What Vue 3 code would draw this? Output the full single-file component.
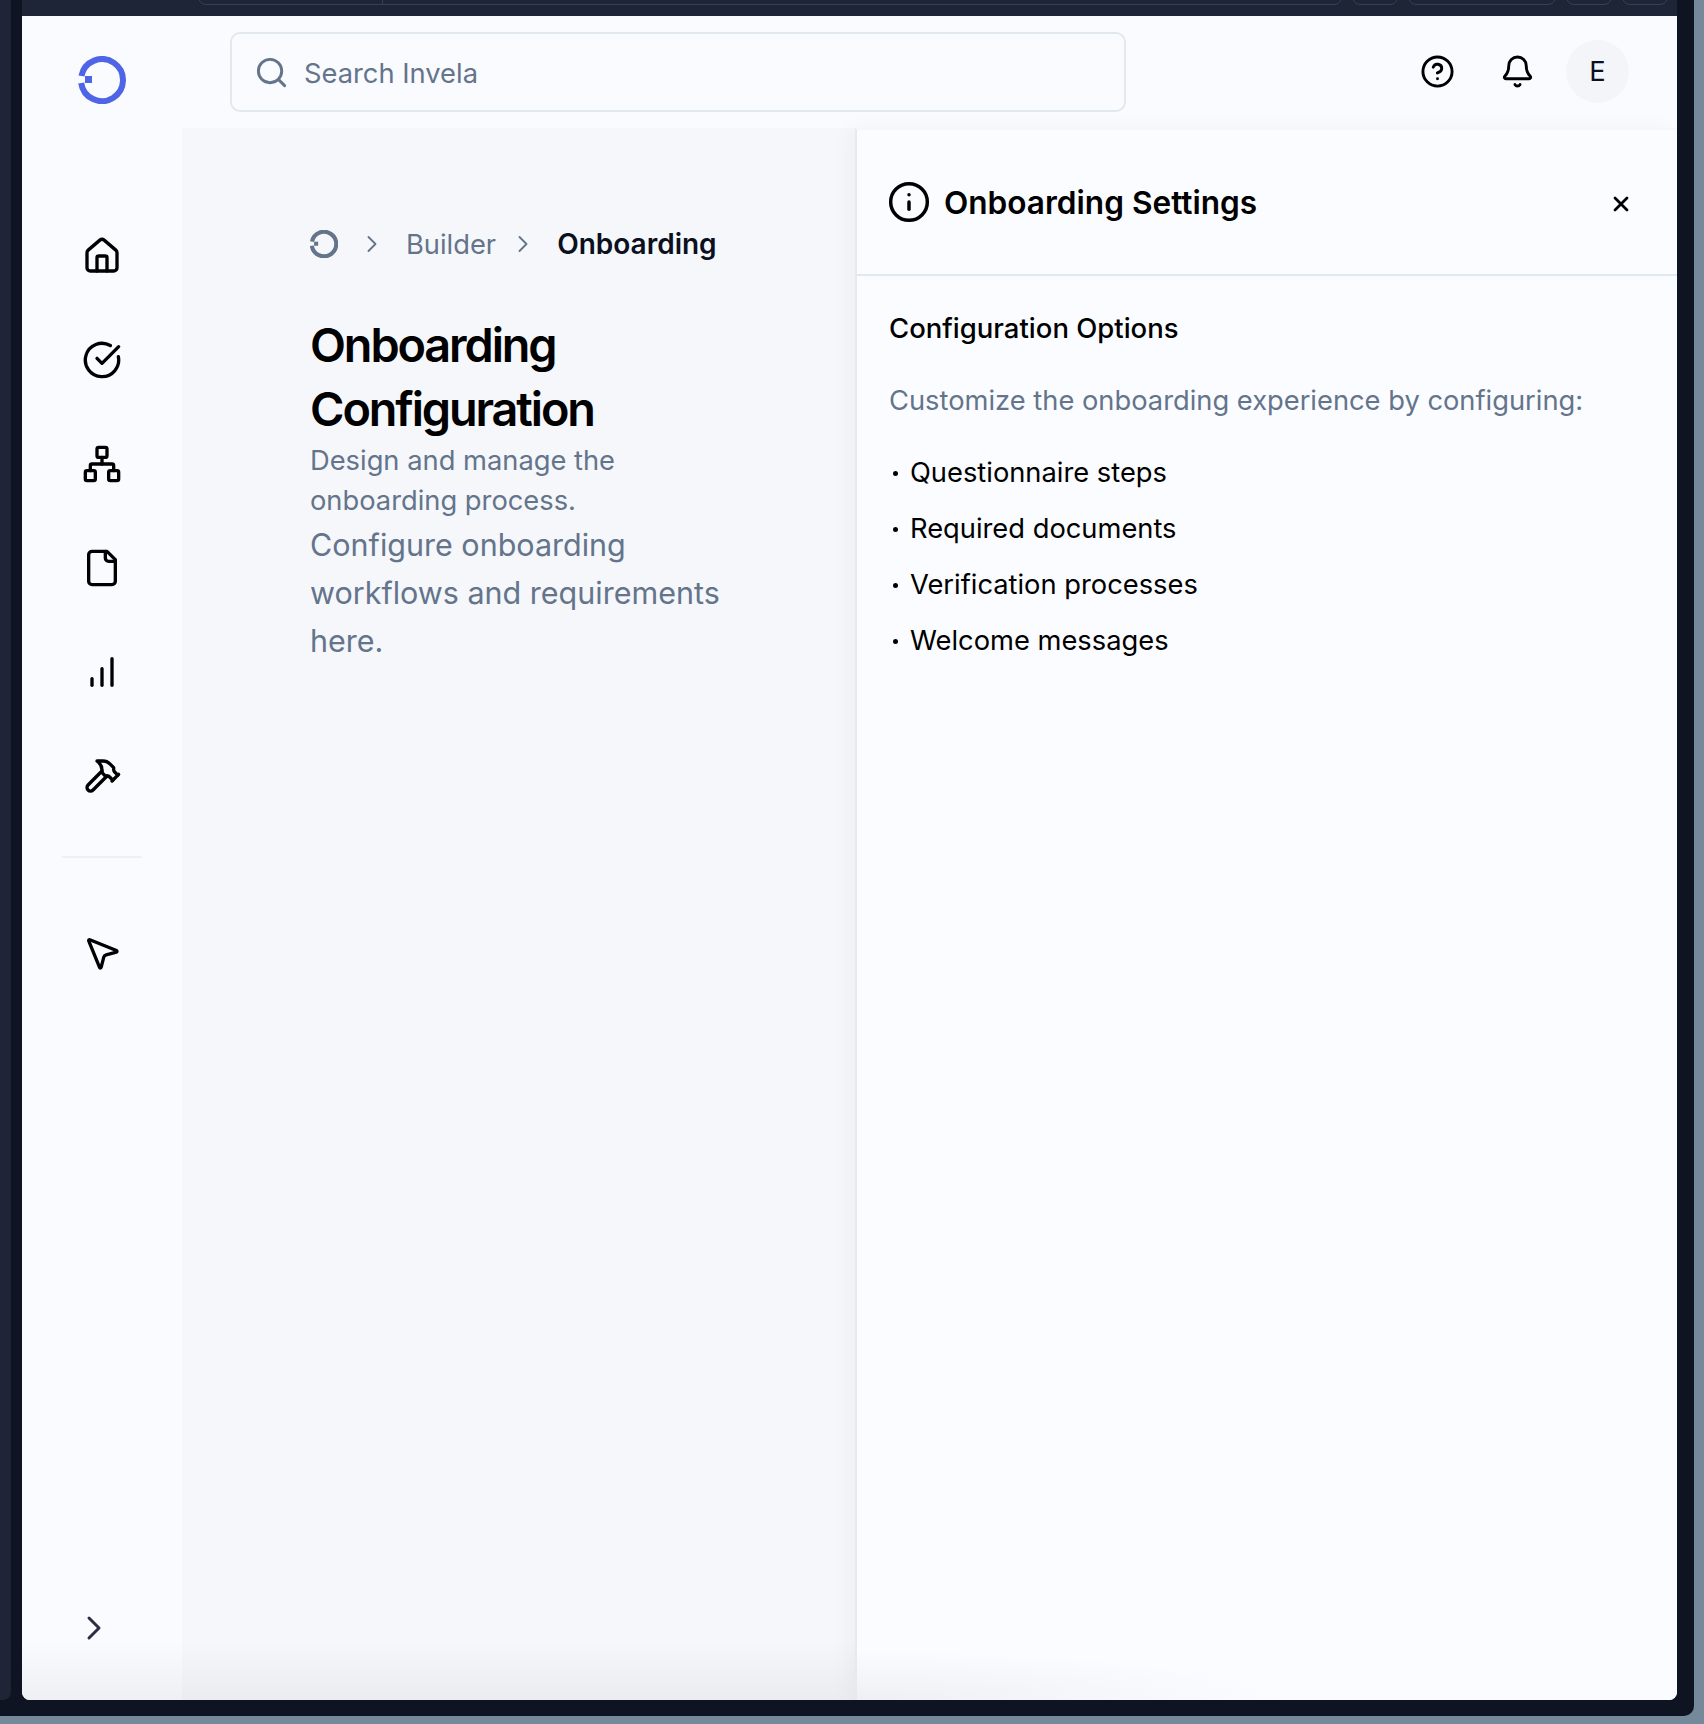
<template>
  <div class="desktop">
    <div class="frame">
      <div class="edge-strip"></div>
      <div class="window-col">
        <div class="tab-bar">
          <div class="tab-url">
            <span class="tab-url-start"></span>
          </div>
          <span class="tab-pill" style="width: 46px"></span>
          <span class="tab-pill" style="width: 148px"></span>
          <span class="tab-pill" style="width: 46px"></span>
          <span class="tab-pill" style="width: 46px"></span>
        </div>
        <div class="window">
          <aside class="sidebar">
            <svg class="logo" viewBox="0 0 48 48" fill="none">
              <path d="M3.4 20A21 21 0 1 1 3.2 27" stroke="#4f65e5" stroke-width="6" />
              <rect x="7" y="20" width="7" height="7" fill="#4f65e5" />
            </svg>
            <nav class="nav">
              <span v-for="item in navItems" :key="item.name" class="nav-item">
                <svg class="nav-icon" viewBox="0 0 24 24" fill="none" stroke="currentColor" stroke-width="2" stroke-linecap="round" stroke-linejoin="round">
                  <path v-for="d in item.paths" :key="d" :d="d" />
                  <rect v-for="r in item.rects || []" :key="r.x + '-' + r.y" :x="r.x" :y="r.y" width="6" height="6" rx="1" />
                </svg>
              </span>
            </nav>
            <div class="nav-divider"></div>
            <span class="nav-item">
              <svg class="nav-icon" viewBox="0 0 24 24" fill="none" stroke="currentColor" stroke-width="2" stroke-linecap="round" stroke-linejoin="round">
                <path d="M4.037 4.688a.495.495 0 0 1 .651-.651l16 6.5a.5.5 0 0 1-.063.947l-6.124 1.58a2 2 0 0 0-1.438 1.435l-1.579 6.126a.5.5 0 0 1-.947.063z" />
              </svg>
            </span>
            <svg class="collapse" viewBox="0 0 24 24" fill="none" stroke="currentColor" stroke-width="1.8" stroke-linecap="round" stroke-linejoin="round">
              <path d="m9 18 6-6-6-6" />
            </svg>
          </aside>

          <header class="topbar">
            <div class="search">
              <svg class="search-icon" viewBox="0 0 24 24" fill="none" stroke="currentColor" stroke-width="2" stroke-linecap="round" stroke-linejoin="round">
                <circle cx="11" cy="11" r="8" />
                <path d="m21 21-4.3-4.3" />
              </svg>
              <span class="search-text">Search Invela</span>
            </div>
            <div class="top-actions">
              <span class="top-action">
                <svg viewBox="0 0 24 24" fill="none" stroke="currentColor" stroke-width="2" stroke-linecap="round" stroke-linejoin="round">
                  <circle cx="12" cy="12" r="10" />
                  <path d="M9.09 9a3 3 0 0 1 5.83 1c0 2-3 3-3 3" />
                  <path d="M12 17h.01" />
                </svg>
              </span>
              <span class="top-action">
                <svg viewBox="0 0 24 24" fill="none" stroke="currentColor" stroke-width="2" stroke-linecap="round" stroke-linejoin="round">
                  <path d="M10.268 21a2 2 0 0 0 3.464 0" />
                  <path d="M3.262 15.326A1 1 0 0 0 4 17h16a1 1 0 0 0 .74-1.673C19.41 13.956 18 12.499 18 8A6 6 0 0 0 6 8c0 4.499-1.411 5.956-2.738 7.326" />
                </svg>
              </span>
              <span class="top-action avatar">E</span>
            </div>
          </header>

          <div class="body">
            <main class="main">
              <div class="crumbs">
                <svg class="crumb-logo" viewBox="0 0 48 48" fill="none">
                  <path d="M3.4 20A21 21 0 1 1 3.2 27" stroke="#64748b" stroke-width="7" />
                  <rect x="7" y="20" width="7" height="7" fill="#64748b" />
                </svg>
                <svg class="crumb-sep" viewBox="0 0 24 24" fill="none" stroke="currentColor" stroke-width="1.6" stroke-linecap="round" stroke-linejoin="round">
                  <path d="m9 18 6-6-6-6" />
                </svg>
                <span class="crumb builder">Builder</span>
                <svg class="crumb-sep" viewBox="0 0 24 24" fill="none" stroke="currentColor" stroke-width="1.6" stroke-linecap="round" stroke-linejoin="round">
                  <path d="m9 18 6-6-6-6" />
                </svg>
                <span class="crumb current">Onboarding</span>
              </div>
              <h1 class="title">Onboarding Configuration</h1>
              <p class="subtitle">Design and manage the onboarding process.</p>
              <p class="lead">Configure onboarding workflows and requirements here.</p>
            </main>

            <section class="panel">
              <div class="panel-head">
                <svg class="info" viewBox="0 0 24 24" fill="none" stroke="currentColor" stroke-width="1.9" stroke-linecap="round" stroke-linejoin="round">
                  <circle cx="12" cy="12" r="10" />
                  <path d="M12 16v-4" />
                  <path d="M12 8h.01" />
                </svg>
                <h2 class="panel-title">Onboarding Settings</h2>
                <svg class="close" viewBox="0 0 16 16" fill="none" stroke="currentColor" stroke-width="2.8" stroke-linecap="round">
                  <path d="M2 2l12 12M14 2L2 14" />
                </svg>
              </div>
              <div class="panel-body">
                <h3 class="options-title">Configuration Options</h3>
                <p class="options-text">Customize the onboarding experience by configuring:</p>
                <ul class="options">
                  <li v-for="opt in options" :key="opt">{{ opt }}</li>
                </ul>
              </div>
            </section>
          </div>
        </div>
      </div>
    </div>
  </div>
</template>

<script setup>
const navItems = [
  {
    name: 'home',
    paths: [
      'M15 21v-8a1 1 0 0 0-1-1h-4a1 1 0 0 0-1 1v8',
      'M3 10a2 2 0 0 1 .709-1.528l7-5.999a2 2 0 0 1 2.582 0l7 5.999A2 2 0 0 1 21 10v9a2 2 0 0 1-2 2H5a2 2 0 0 1-2-2z'
    ]
  },
  { name: 'tasks', paths: ['M21.801 10A10 10 0 1 1 17 3.335', 'm9 11 3 3L22 4'] },
  {
    name: 'network',
    paths: ['M5 16v-3a1 1 0 0 1 1-1h12a1 1 0 0 1 1 1v3', 'M12 12V8'],
    rects: [{ x: 16, y: 16 }, { x: 2, y: 16 }, { x: 9, y: 2 }]
  },
  {
    name: 'files',
    paths: [
      'M15 2H6a2 2 0 0 0-2 2v16a2 2 0 0 0 2 2h12a2 2 0 0 0 2-2V7Z',
      'M14 2v4a2 2 0 0 0 2 2h4'
    ]
  },
  { name: 'insights', paths: ['M12 20v-10', 'M18 20V4', 'M6 20v-4'] },
  {
    name: 'builder',
    paths: [
      'm15 12-8.373 8.373a1 1 0 1 1-3-3L12 9',
      'm18 15 4-4',
      'm21.5 11.5-1.914-1.914A2 2 0 0 1 19 8.172V7l-2.26-2.26a6 6 0 0 0-4.202-1.756L9 2.96l.92.82A6.18 6.18 0 0 1 12 8.4V10l2 2h1.172a2 2 0 0 1 1.414.586L18.5 14.5'
    ]
  }
];

const options = [
  'Questionnaire steps',
  'Required documents',
  'Verification processes',
  'Welcome messages'
];
</script>

<style>
html,
body {
  margin: 0;
  background: #748a9a;
}
</style>

<style scoped>
* {
  box-sizing: border-box;
}
.desktop {
  width: 1704px;
  height: 1724px;
  background: #748a9a;
  font-family: Inter, "Liberation Sans", sans-serif;
  overflow: hidden;
}
.frame {
  width: 1694px;
  height: 1716px;
  display: flex;
  background: #0e1421;
  border-bottom-right-radius: 10px;
}
.edge-strip {
  width: 11px;
  height: 1700px;
  margin-right: 11px;
  background: #1e2537;
  border-bottom-right-radius: 8px;
}
.window-col {
  width: 1655px;
  display: flex;
  flex-direction: column;
}
.tab-bar {
  height: 16px;
  padding-left: 176px;
  padding-right: 9px;
  display: flex;
  gap: 10px;
  background: #1e2537;
  overflow: hidden;
}
.tab-url {
  flex: 1;
  height: 22px;
  margin-top: -17px;
  border: 1.5px solid #383f54;
  border-radius: 8px;
  padding-left: 183px;
}
.tab-url-start {
  display: block;
  height: 100%;
  border-left: 1.5px solid #383f54;
}
.tab-pill {
  height: 22px;
  margin-top: -17px;
  border: 1.5px solid #383f54;
  border-radius: 8px;
}
.window {
  height: 1684px;
  display: grid;
  grid-template-columns: 160px 1fr;
  grid-template-rows: 112px 1fr;
  background: #fafbff;
  border-radius: 0 0 8px 8px;
  overflow: hidden;
}
.sidebar {
  grid-row: 1 / 3;
  display: flex;
  flex-direction: column;
  align-items: center;
  background: linear-gradient(to bottom, #fafbff calc(100% - 60px), #eff0f3);
}
.logo {
  width: 48px;
  height: 48px;
  margin-top: 40px;
  flex: none;
}
.nav {
  margin-top: 130px;
  display: flex;
  flex-direction: column;
  gap: 60px;
}
.nav-item {
  width: 44px;
  height: 44px;
  display: flex;
  align-items: center;
  justify-content: center;
  color: #000;
}
.nav-icon {
  display: block;
  width: 40px;
  height: 40px;
}
.nav-divider {
  width: 80px;
  height: 2px;
  margin: 58px 0 73px;
  background: #eef0f6;
}
.collapse {
  width: 40px;
  height: 40px;
  margin-top: auto;
  margin-bottom: 52px;
  margin-right: 16px;
  color: #2b2f42;
}
.topbar {
  display: flex;
  align-items: flex-start;
  justify-content: space-between;
  padding: 16px 48px 0 48px;
}
.search {
  width: 896px;
  height: 80px;
  display: flex;
  align-items: center;
  gap: 15px;
  padding-left: 22px;
  border: 2px solid #e2e8f0;
  border-radius: 10px;
  color: #64748b;
}
.search-icon {
  width: 35px;
  height: 35px;
}
.search-text {
  font-size: 27.3px;
  padding-top: 2px;
}
.top-actions {
  display: flex;
  align-items: center;
  gap: 17px;
  margin-top: 8px;
}
.top-action {
  width: 63px;
  height: 63px;
  display: flex;
  align-items: center;
  justify-content: center;
  color: #000;
}
.top-action svg {
  width: 35px;
  height: 35px;
}
.avatar {
  border-radius: 50%;
  background: #f3f5f9;
  font-size: 27.3px;
  color: #0a1020;
}
.body {
  display: flex;
  min-height: 0;
}
.main {
  flex: 1;
  padding: 96px 128px 0;
  background: linear-gradient(to bottom, #f5f7fb calc(100% - 60px), #ebecef);
}
.crumbs {
  display: flex;
  align-items: center;
  gap: 20px;
  height: 40px;
  white-space: nowrap;
  color: #64748b;
}
.crumb-logo {
  width: 28px;
  height: 28px;
}
.crumb-sep {
  width: 28px;
  height: 28px;
}
.crumb {
  font-size: 27.3px;
}
.builder {
  margin-right: -7px;
}
.current {
  color: #0a1020;
  font-size: 28px;
  font-weight: 600;
}
.title {
  margin: 49px 0 0;
  font-size: 46.8px;
  line-height: 64px;
  font-weight: 600;
  letter-spacing: -2.1px;
  color: #000;
}
.subtitle {
  margin: 0;
  font-size: 27.3px;
  line-height: 40px;
  color: #64748b;
}
.lead {
  margin: 0;
  font-size: 30.5px;
  line-height: 48px;
  color: #64748b;
}
.panel {
  position: relative;
  width: 822px;
  border-left: 2px solid #e6e9ee;
  border-top: 2px solid #f5f7fb;
  background: radial-gradient(ellipse 430px 50px at 0 100%, #eff0f3, rgba(239, 240, 243, 0)) #fbfcff;
  box-shadow: -6px 0 20px rgba(15, 23, 42, 0.035);
}
.panel-head {
  height: 146px;
  display: flex;
  align-items: center;
  padding: 0 48px 0 30px;
  border-bottom: 2px solid #e2e8f0;
}
.info {
  width: 44px;
  height: 44px;
  color: #000;
  flex: none;
}
.panel-title {
  margin: 0 0 0 13px;
  flex: 1;
  font-size: 31.6px;
  font-weight: 600;
  color: #000;
}
.close {
  width: 16px;
  height: 16px;
  margin-top: 4px;
  color: #000;
}
.panel-body {
  padding: 32px 32px 0;
}
.options-title {
  margin: 0;
  font-size: 27.5px;
  line-height: 40px;
  font-weight: 500;
  color: #000;
}
.options-text {
  margin: 33px 0 0;
  font-size: 27.3px;
  line-height: 40px;
  color: #64748b;
}
.options {
  list-style: none;
  margin: 32px 0 0;
  padding: 0;
}
.options li {
  position: relative;
  padding-left: 21px;
  height: 40px;
  margin-bottom: 16px;
  font-size: 27.3px;
  line-height: 40px;
  color: #000;
}
.options li::before {
  content: "";
  position: absolute;
  left: 4px;
  top: 18px;
  width: 5px;
  height: 5px;
  border-radius: 50%;
  background: #000;
}
</style>
